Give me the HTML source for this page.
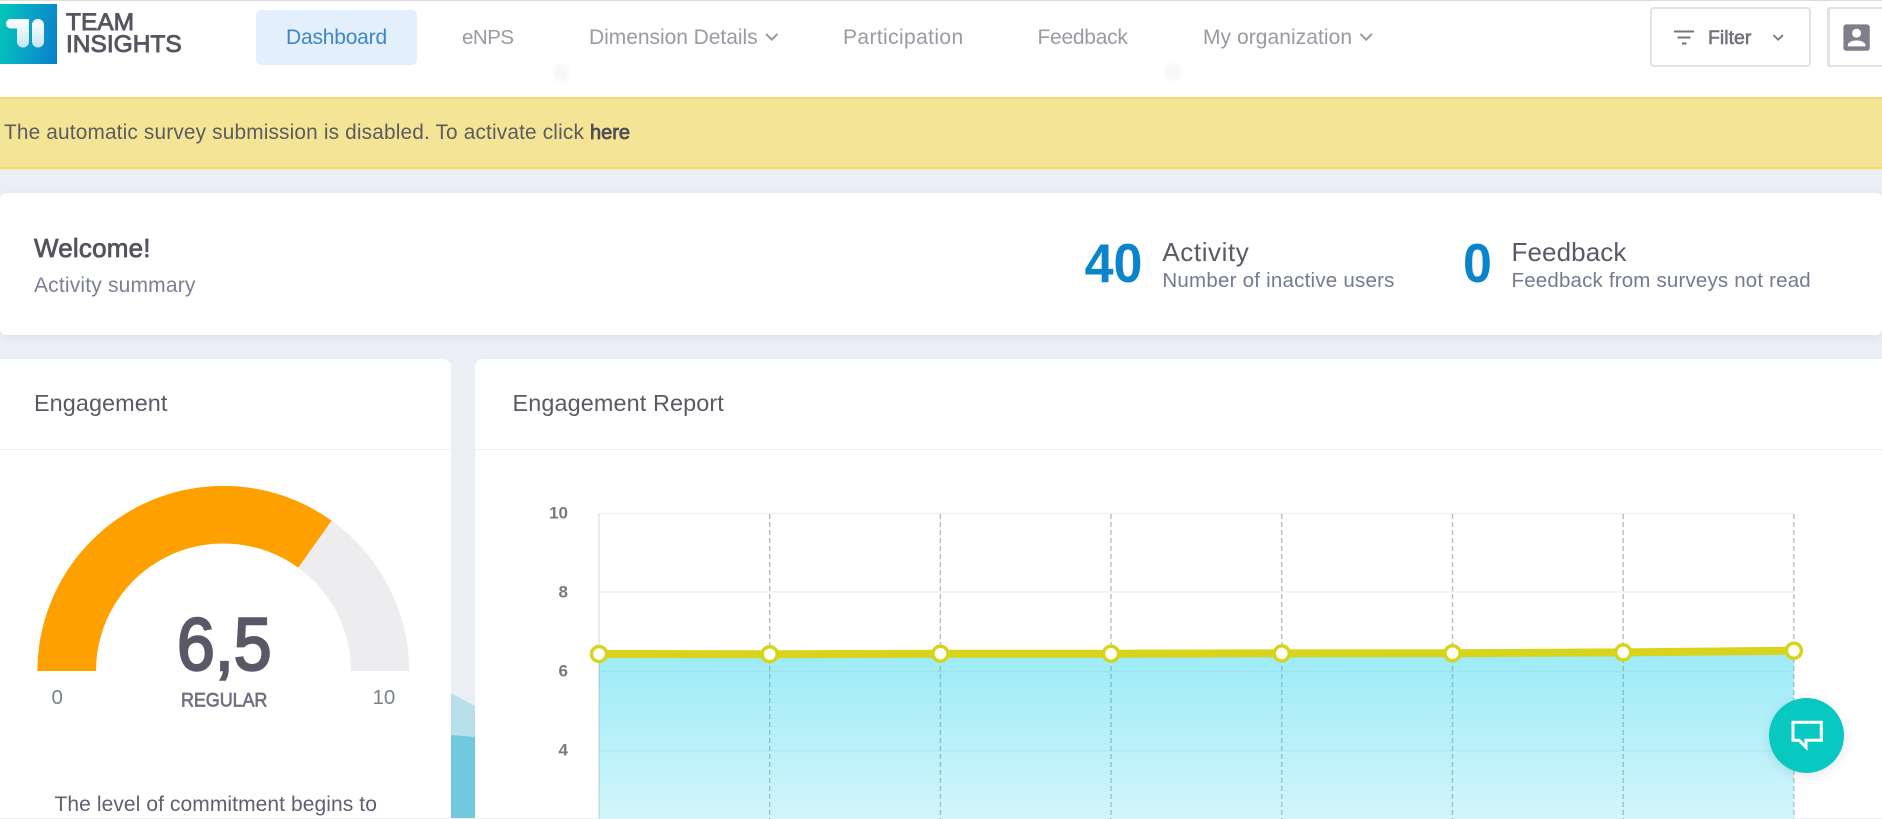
<!DOCTYPE html>
<html lang="en">
<head>
<meta charset="utf-8">
<title>Team Insights Dashboard</title>
<style>
html,body{margin:0;padding:0;width:1882px;height:819px;overflow:hidden;background:#ebeef2;font-family:"Liberation Sans",Arial,sans-serif}
body{position:relative}
.abs{position:absolute}
.t{position:absolute;line-height:0;white-space:nowrap}
header{position:absolute;left:0;top:0;width:1882px;height:97px;background:#fff;border-top:1px solid #dcdcdc;box-sizing:border-box}
.nav{font-size:21px;color:#9a9aa2}
.banner{position:absolute;left:0;top:97px;width:1882px;height:72px;box-sizing:border-box;background:#f4e596;border-top:2px solid #f2dc6f;border-bottom:2px solid #f2dc6f}
.card{position:absolute;background:#fff}
svg{position:absolute;left:0;top:0;overflow:hidden}
</style>
</head>
<body>
<header></header>

<!-- faint dots -->
<div class="abs" style="left:553px;top:64px;width:15px;height:18px;border-radius:8px;background:#f7f7f7;filter:blur(2px)"></div>
<div class="abs" style="left:1165px;top:63px;width:15px;height:18px;border-radius:8px;background:#f7f7f7;filter:blur(2px)"></div>

<!-- logo -->
<div class="abs" style="left:0;top:4px;width:57px;height:60px;background:linear-gradient(100deg,#00c9b6 0%,#0a9fc8 55%,#0a7fcb 100%)"></div>
<svg width="57" height="60" style="left:0;top:4px">
  <defs><linearGradient id="lg" x1="0" y1="0" x2="0" y2="1"><stop offset="0" stop-color="#fff"/><stop offset="1" stop-color="#c6e6f3"/></linearGradient></defs>
  <path d="M10 15H29V37.500a6 6 0 0 1-12 0V24.500H10.500a4.750 4.750 0 0 1-4.500-4.750a4.750 4.750 0 0 1 4-4.750z" fill="url(#lg)"/>
  <rect x="32" y="15" width="12" height="28.500" rx="6" fill="url(#lg)"/>
</svg>
<span class="t" style="left:66px;top:22.800px;font-size:24.500px;color:#565663;-webkit-text-stroke:.9px #565663">TEAM</span>
<span class="t" style="left:66px;top:44.700px;font-size:24.500px;color:#565663;-webkit-text-stroke:.9px #565663">INSIGHTS</span>

<!-- nav -->
<div class="abs" style="left:256px;top:10px;width:161px;height:55px;background:#e3f0fc;border-radius:5px"></div>
<span class="t nav" style="left:286px;top:37.700px;color:#3f87c4;letter-spacing:-.2px">Dashboard</span>
<span class="t nav" style="left:462px;top:37.700px;font-size:20.500px;letter-spacing:-.5px">eNPS</span>
<span class="t nav" style="left:589px;top:37.700px;letter-spacing:-.04px">Dimension Details</span>
<span class="t nav" style="left:843px;top:37.700px;letter-spacing:.38px">Participation</span>
<span class="t nav" style="left:1037.500px;top:37.700px;letter-spacing:-.27px">Feedback</span>
<span class="t nav" style="left:1203px;top:37.700px;letter-spacing:.06px">My organization</span>
<svg width="1882" height="97" fill="none">
  <path d="M766 34l5.700 5.700 5.700-5.700" stroke="#9a9aa2" stroke-width="2"/>
  <path d="M1360.500 34l5.700 5.700 5.700-5.700" stroke="#9a9aa2" stroke-width="2"/>
</svg>

<!-- filter button -->
<div class="abs" style="left:1650px;top:7px;width:161px;height:60px;box-sizing:border-box;border:2px solid #e3e3e3;border-radius:4px;background:#fff"></div>
<svg width="1882" height="97" fill="none">
  <path d="M1674 31.500H1694M1677.500 37.500H1690.500M1682 43.500H1686.500" stroke="#767682" stroke-width="2"/>
  <path d="M1773.500 35l4.700 4.700 4.700-4.700" stroke="#767682" stroke-width="1.800"/>
</svg>
<span class="t" style="left:1708px;top:38.200px;font-size:19.500px;color:#71717d;-webkit-text-stroke:.6px #71717d">Filter</span>

<!-- user button -->
<div class="abs" style="left:1827px;top:7px;width:70px;height:60px;box-sizing:border-box;border:2px solid #e3e3e3;border-left-width:3px;border-radius:2px;background:#fff"></div>
<svg width="35.200" height="35.200" viewBox="0 0 24 24" style="left:1839px;top:19.600px"><path fill="#7f7f8c" d="M3 5v14c0 1.100.89 2 2 2h14c1.100 0 2-.9 2-2V5c0-1.100-.9-2-2-2H5c-1.110 0-2 .9-2 2zm12 4c0 1.660-1.340 3-3 3s-3-1.340-3-3 1.340-3 3-3 3 1.340 3 3zm-9 8c0-2 4-3.100 6-3.100s6 1.100 6 3.100v1H6v-1z"/></svg>

<!-- banner -->
<div class="banner"></div>
<div class="abs" style="left:0;top:169px;width:1882px;height:1px;background:#f4efc4"></div>
<span class="t" style="left:4px;top:132.800px;font-size:20.800px;color:#5c5c5e;letter-spacing:.17px">The automatic survey submission is disabled. To activate click <b style="font-weight:normal;font-size:20px;letter-spacing:0;color:#4f4f55;-webkit-text-stroke:.8px #4f4f55">here</b></span>

<!-- welcome card -->
<div class="card" style="left:0;top:193px;width:1882px;height:142px;border-radius:6px;box-shadow:0 3px 10px rgba(60,70,90,.07)"></div>
<span class="t" style="left:34px;top:248px;font-size:26px;color:#53535f;letter-spacing:.2px;-webkit-text-stroke:.75px #53535f">Welcome!</span>
<span class="t" style="left:34px;top:286.400px;font-size:21px;color:#7b8095;letter-spacing:.18px">Activity summary</span>

<span class="t" style="left:1084.600px;top:264px;font-size:52px;font-weight:bold;color:#0a85cc;transform:scaleY(1.050)">40</span>
<span class="t" style="left:1162.400px;top:251.500px;font-size:26px;color:#5a5a66;letter-spacing:.58px">Activity</span>
<span class="t" style="left:1162.400px;top:280.600px;font-size:20.500px;color:#747a90;letter-spacing:.23px">Number of inactive users</span>

<span class="t" style="left:1463px;top:264px;font-size:52px;font-weight:bold;color:#0a85cc;transform:scaleY(1.050)">0</span>
<span class="t" style="left:1511.500px;top:251.500px;font-size:26px;color:#5a5a66;letter-spacing:.1px">Feedback</span>
<span class="t" style="left:1511.500px;top:280.600px;font-size:20.500px;color:#747a90;letter-spacing:.18px">Feedback from surveys not read</span>

<!-- background shapes between cards -->
<svg width="1882" height="819">
  <polygon points="451,693 475,706 475,737 451,735" fill="#b9dfea"/>
  <polygon points="451,735 475,737 475,818 451,818" fill="#70c9dd"/>
</svg>

<!-- engagement card -->
<div class="card" style="left:0;top:359px;width:451px;height:460px;border-radius:0 8px 0 0"></div>
<div class="abs" style="left:0;top:449px;width:451px;height:1px;background:#eeeeee"></div>
<span class="t" style="left:34px;top:403.200px;font-size:23.400px;color:#5a5a66;letter-spacing:.08px">Engagement</span>

<svg width="1882" height="819">
  <path d="M37.300 671A186 186 0 0 1 331.700 520.700L298.300 567.700A127.500 127.500 0 0 0 96 671Z" fill="#fea000"/>
  <path d="M331.700 520.700A186 186 0 0 1 409.300 671H351A127.500 127.500 0 0 0 298.300 567.700Z" fill="#ededef"/>
</svg>
<span class="t" style="left:177px;top:645.300px;font-size:68px;color:#585866;transform:scaleY(1.090);-webkit-text-stroke:2.200px #585866">6,5</span>
<span class="t" style="left:181px;top:700.400px;font-size:18px;color:#6f7080;letter-spacing:-.1px;transform:scaleY(1.100);-webkit-text-stroke:.6px #6f7080">REGULAR</span>
<span class="t" style="left:51.500px;top:697.500px;font-size:20.500px;color:#7b8095">0</span>
<span class="t" style="left:372.500px;top:697.500px;font-size:20.500px;color:#7b8095">10</span>
<span class="t" style="left:54.500px;top:804.900px;font-size:21px;color:#5f6070;letter-spacing:.08px">The level of commitment begins to</span>

<!-- engagement report card -->
<div class="card" style="left:475px;top:359px;width:1407px;height:460px;border-radius:8px 0 0 0"></div>
<div class="abs" style="left:475px;top:449px;width:1407px;height:1px;background:#eeeeee"></div>
<span class="t" style="left:512.500px;top:403.200px;font-size:23.400px;color:#5a5a66;letter-spacing:.12px">Engagement Report</span>

<svg width="1882" height="819">
  <defs>
    <linearGradient id="area" gradientUnits="userSpaceOnUse" x1="0" y1="652" x2="0" y2="819">
      <stop offset="0" stop-color="#9cebf7"/><stop offset="1" stop-color="#d2f6fb"/>
    </linearGradient>
  </defs>
  <!-- grid on white -->
  <path d="M599 513.500H1794M599 592H1794" stroke="#eeeeee" stroke-width="1.200" fill="none"/>
  <path d="M599 513V654" stroke="#e6e6e6" stroke-width="1.600" fill="none"/>
  <g stroke="#bbbbbb" stroke-width="1.400" stroke-dasharray="5 3" fill="none">
    <path d="M769.700 514V660M940.400 514V660M1111 514V660M1281.800 514V660M1452.500 514V660M1623.200 514V660M1793.900 514V660"/>
  </g>
  <!-- area -->
  <polygon points="599,653.600 769.700,653.800 940.400,653.300 1111,653.300 1281.800,653 1452.500,652.800 1623.200,652 1793.900,650.300 1793.900,819 599,819" fill="url(#area)"/>
  <!-- grid over area -->
  <path d="M599 671.500H1794M599 751H1794" stroke="rgba(0,90,110,.05)" stroke-width="1.200" fill="none"/>
  <path d="M599 654V819" stroke="rgba(60,110,120,.18)" stroke-width="1.600" fill="none"/>
  <g stroke="rgba(90,120,130,.42)" stroke-width="1.400" stroke-dasharray="5 3" fill="none">
    <path d="M769.700 658V819M940.400 658V819M1111 658V819M1281.800 658V819M1452.500 658V819M1623.200 658V819M1793.900 658V819"/>
  </g>
  <!-- series -->
  <polyline points="599,654 769.700,654.200 940.400,653.700 1111,653.700 1281.800,653.400 1452.500,653.200 1623.200,652.400 1793.900,650.700" fill="none" stroke="#d7d41b" stroke-width="8"/>
  <g fill="#fff" stroke="#d7d41b" stroke-width="3.500">
    <circle cx="599" cy="654" r="7.500"/><circle cx="769.700" cy="654.200" r="7.500"/><circle cx="940.400" cy="653.700" r="7.500"/><circle cx="1111" cy="653.700" r="7.500"/><circle cx="1281.800" cy="653.400" r="7.500"/><circle cx="1452.500" cy="653.200" r="7.500"/><circle cx="1623.200" cy="652.400" r="7.500"/><circle cx="1793.900" cy="650.700" r="7.500"/>
  </g>
  <g font-family="Liberation Sans, Arial, sans-serif" font-size="17" font-weight="bold" fill="#7a7a7a" text-anchor="end">
    <text x="568" y="518.300">10</text><text x="568" y="597.300">8</text><text x="568" y="676.300">6</text><text x="568" y="755.300">4</text>
  </g>
</svg>

<!-- bottom hairline -->
<div class="abs" style="left:0;top:818px;width:451px;height:1px;background:#eeeeee"></div>
<div class="abs" style="left:475px;top:818px;width:124px;height:1px;background:#eeeeee"></div>
<div class="abs" style="left:1794px;top:818px;width:88px;height:1px;background:#eeeeee"></div>

<!-- chat button -->
<div class="abs" style="left:1769px;top:698px;width:75px;height:75px;border-radius:50%;background:#08c8c2;box-shadow:0 3px 12px rgba(0,0,0,.1)"></div>
<svg width="1882" height="819" fill="none">
  <path d="M1793 722.200H1821.300V740.300H1806V747.300L1799 740.300H1793Z" stroke="#fff" stroke-width="3"/>
</svg>
</body>
</html>
